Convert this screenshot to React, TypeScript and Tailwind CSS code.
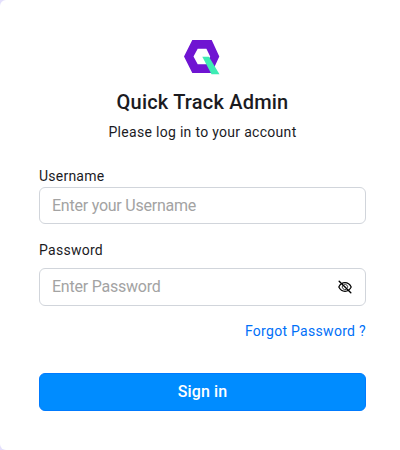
import { useState } from 'react';
import { BsEye } from 'react-icons/bs';

function Logo() {
  return (
    <svg width="36" height="35" viewBox="0 0 36 35" className="mx-auto block">
      <path
        fill="#6f14d2"
        fillRule="evenodd"
        d="M8.3 0H27.7L35.3 16.5L27.7 33H8.3L0 16.5ZM13.7 8.8L9.5 16.5L13.7 24.2H22.4L26.2 16.5L22.4 8.8Z"
      />
      <path fill="#3eecb4" d="M18.3 16.7H24.9L35.5 34.2H27.5Z" />
    </svg>
  );
}

function EyeSlash() {
  return (
    <svg width="14" height="14" viewBox="0 0 14 14" fill="none" stroke="currentColor">
      <path strokeWidth="1.2" d="M0.8 7C2.2 4.2 4.4 2.7 7 2.7S11.8 4.2 13.2 7C11.8 9.8 9.6 11.3 7 11.3S2.2 9.8 0.8 7Z" />
      <path strokeWidth="0.8" d="M4.6 5.4A2.9 2.9 0 0 0 8.4 9.4M6.2 4.4A2.8 2.8 0 0 1 9.6 7.8" />
      <path strokeWidth="1.4" strokeLinecap="round" d="M1.2 1.2L12.8 12.8" />
    </svg>
  );
}

export default function App() {
  const [username, setUsername] = useState('');
  const [password, setPassword] = useState('');
  const [showPassword, setShowPassword] = useState(false);

  const inputClass =
    'block w-full rounded-md border border-[#d1d5db] bg-white px-3 text-base tracking-[-0.23px] text-gray-800 outline-none placeholder:text-[#a3a3a3]';

  return (
    <div className="h-[450px] w-[400px] bg-[#e3dffc] font-[Roboto,sans-serif] text-[#1b1b1f]">
      <div className="h-full rounded-l-md bg-white pt-10 pr-[34px] pl-[39px]">
        <div className="h-[50px] pr-px">
          <Logo />
        </div>
        <h1 className="text-center text-xl leading-6 font-medium tracking-[0.2px]">Quick Track Admin</h1>
        <p className="mt-2 text-center text-sm leading-5 tracking-[0.3px]">Please log in to your account</p>

        <form onSubmit={(e) => e.preventDefault()}>
          <label htmlFor="username" className="mt-[25px] block h-5 text-sm leading-[19px] tracking-[0.23px]">
            Username
          </label>
          <input
            id="username"
            type="text"
            value={username}
            onChange={(e) => setUsername(e.target.value)}
            placeholder="Enter your Username"
            className={`${inputClass} h-[37px]`}
          />

          <label htmlFor="password" className="mt-4 block h-7 text-sm leading-5 tracking-[0.27px]">
            Password
          </label>
          <div className="relative">
            <input
              id="password"
              type={showPassword ? 'text' : 'password'}
              value={password}
              onChange={(e) => setPassword(e.target.value)}
              placeholder="Enter Password"
              className={`${inputClass} h-[38px] pb-0.5`}
            />
            <button
              type="button"
              aria-label="Toggle password"
              onClick={() => setShowPassword(!showPassword)}
              className="absolute top-3 right-3.5 text-black"
            >
              {showPassword ? <BsEye size={14} /> : <EyeSlash />}
            </button>
          </div>

          <a href="#" className="mt-[15px] block text-right text-sm leading-5 tracking-[0.3px] text-[#0070f8]">
            Forgot Password ?
          </a>

          <button
            type="submit"
            className="mt-8 block h-[38px] w-full rounded-md border border-[#007bff] bg-[#008cff] text-base font-medium tracking-[0.1px] text-white"
          >
            Sign in
          </button>
        </form>
      </div>
    </div>
  );
}
